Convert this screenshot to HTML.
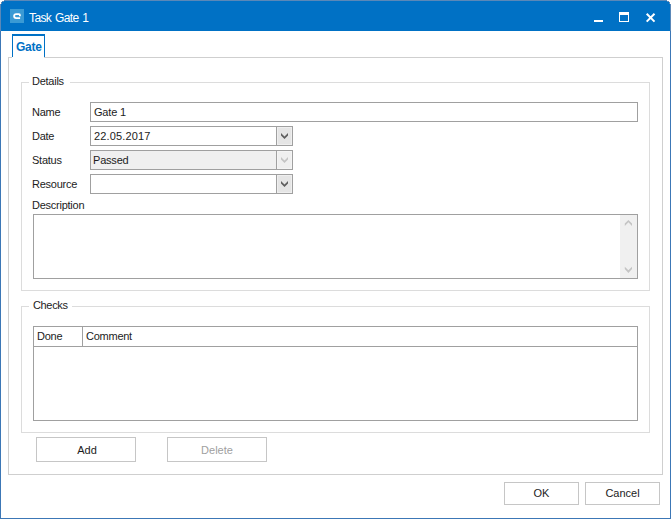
<!DOCTYPE html>
<html><head><meta charset="utf-8">
<style>
html,body{margin:0;padding:0;width:671px;height:519px;overflow:hidden;background:#fff;}
body{position:relative;font-family:"Liberation Sans",sans-serif;font-size:11px;color:#1c1c1c;}
.a{position:absolute;box-sizing:border-box;}
.t{position:absolute;white-space:nowrap;line-height:11px;font-size:11px;}
.win{left:0;top:0;width:671px;height:519px;border:1px solid #3c77b6;border-top-color:#5b88b8;background:#fff;}
.title{left:1px;top:1px;width:669px;height:30px;background:#0071c5;}
.grp{border:1px solid #dcdcdc;}
.inp{border:1px solid #a0a0a0;background:#fff;}
.btn{border:1px solid #c6c6c6;background:#fff;}
.dd{border-left:1px solid #a0a0a0;background:#e5e5e5;box-shadow:inset 0 0 0 1px #efefef;}
</style></head><body>
<div class="a win"></div>
<div class="a title"></div>
<div class="a" style="left:0;top:0;width:1px;height:31px;background:#5b88b8;"></div>
<div class="a" style="left:670px;top:0;width:1px;height:31px;background:#5b88b8;"></div>
<div class="a" style="left:0;top:0;width:4px;height:1px;background:#fff;"></div>
<div class="a" style="left:0;top:1px;width:2px;height:1px;background:#fff;"></div>
<div class="a" style="left:0;top:2px;width:1px;height:2px;background:#fff;"></div>
<div class="a" style="left:2px;top:1px;width:2px;height:1px;background:#5b88b8;"></div>
<div class="a" style="left:1px;top:2px;width:1px;height:2px;background:#5b88b8;"></div>
<div class="a" style="left:667px;top:0;width:4px;height:1px;background:#fff;"></div>
<div class="a" style="left:669px;top:1px;width:2px;height:1px;background:#fff;"></div>
<div class="a" style="left:670px;top:2px;width:1px;height:2px;background:#fff;"></div>
<div class="a" style="left:667px;top:1px;width:2px;height:1px;background:#5b88b8;"></div>
<div class="a" style="left:669px;top:2px;width:1px;height:2px;background:#5b88b8;"></div>
<!-- icon -->
<div class="a" style="left:10px;top:9px;width:14px;height:14px;background:#3a9ad4;"></div>
<svg class="a" style="left:10px;top:9px" width="14" height="14" viewBox="0 0 14 14">
<path d="M9.9 7.3 V6 Q9.9 5.1 9 5.1 H6.1 Q4.1 5.1 4.1 7.1 Q4.1 9.1 6.1 9.1 H10.1" fill="none" stroke="#fff" stroke-width="1.8"/>
</svg>
<div class="t" style="left:29px;top:12px;font-size:12px;line-height:12px;color:#fff;letter-spacing:-0.6px;word-spacing:1px;">Task Gate 1</div>
<!-- min -->
<div class="a" style="left:594px;top:20px;width:9px;height:2px;background:#fff;"></div>
<!-- max -->
<div class="a" style="left:619px;top:12px;width:10px;height:10px;border:1px solid #fff;border-top-width:3px;"></div>
<!-- close -->
<svg class="a" style="left:645px;top:12px" width="12" height="11" viewBox="0 0 12 11">
<path d="M1.7 1.8 L9.5 9.6 M9.5 1.8 L1.7 9.6" stroke="#fff" stroke-width="2" fill="none"/>
</svg>

<!-- tab panel -->
<div class="a" style="left:8px;top:57px;width:655px;height:418px;border:1px solid #cfcfcf;"></div>
<div class="a" style="left:12px;top:34px;width:33px;height:23px;border:1px solid #0071c5;border-top-width:2px;border-bottom:none;background:#fff;"></div>
<div class="a" style="left:12px;top:57px;width:32px;height:1px;background:#fff;"></div>
<div class="t" style="left:16px;top:41px;font-size:12px;line-height:12px;font-weight:bold;letter-spacing:-0.25px;color:#0071c5;">Gate</div>

<!-- Details group -->
<div class="a grp" style="left:21px;top:82px;width:629px;height:209px;"></div>
<div class="a" style="left:29px;top:78px;width:41px;height:8px;background:#fff;"></div>
<div class="t" style="left:32px;top:76px;letter-spacing:-0.25px;">Details</div>

<div class="t" style="left:32px;top:107px;letter-spacing:-0.25px;">Name</div>
<div class="t" style="left:32px;top:131px;letter-spacing:-0.25px;">Date</div>
<div class="t" style="left:32px;top:155px;letter-spacing:-0.25px;">Status</div>
<div class="t" style="left:32px;top:179px;letter-spacing:-0.25px;">Resource</div>
<div class="t" style="left:32px;top:200px;letter-spacing:-0.25px;">Description</div>

<div class="a inp" style="left:90px;top:102px;width:548px;height:20px;"></div>
<div class="t" style="left:94px;top:107px;letter-spacing:-0.2px;">Gate 1</div>

<div class="a inp" style="left:90px;top:126px;width:203px;height:20px;"></div>
<div class="a dd" style="left:276px;top:127px;width:16px;height:18px;"></div>
<svg class="a" style="left:277px;top:128px" width="15" height="18" viewBox="0 0 15 18">
<path d="M4 5 L7.5 8.5 L11 5 L11 7.4 L7.5 10.9 L4 7.4 Z" fill="#5f5f5f"/>
</svg>
<div class="t" style="left:94px;top:131px;letter-spacing:0.15px;">22.05.2017</div>

<div class="a inp" style="left:90px;top:150px;width:203px;height:20px;background:#f0f0f0;"></div>
<div class="a dd" style="left:276px;top:151px;width:16px;height:18px;background:#efefef;box-shadow:inset 0 0 0 1px #f4f4f4;"></div>
<svg class="a" style="left:277px;top:152px" width="15" height="18" viewBox="0 0 15 18">
<path d="M4 5 L7.5 8.5 L11 5 L11 7.4 L7.5 10.9 L4 7.4 Z" fill="#c4c4c4"/>
</svg>
<div class="t" style="left:93px;top:155px;letter-spacing:-0.2px;">Passed</div>

<div class="a inp" style="left:90px;top:174px;width:203px;height:20px;"></div>
<div class="a dd" style="left:276px;top:175px;width:16px;height:18px;"></div>
<svg class="a" style="left:277px;top:176px" width="15" height="18" viewBox="0 0 15 18">
<path d="M4 5 L7.5 8.5 L11 5 L11 7.4 L7.5 10.9 L4 7.4 Z" fill="#5f5f5f"/>
</svg>

<div class="a inp" style="left:33px;top:214px;width:605px;height:65px;"></div>
<div class="a" style="left:620px;top:215px;width:17px;height:63px;background:#f0f0f0;"></div>
<svg class="a" style="left:620px;top:215px" width="17" height="63" viewBox="0 0 17 63">
<path d="M4.8 10.9 L4.8 8.5 L8.4 4.9 L12 8.5 L12 10.9 L8.4 7.3 Z" fill="#c4c4c4"/>
<path d="M4.8 51.7 L8.4 55.3 L12 51.7 L12 54.1 L8.4 57.9 L4.8 54.1 Z" fill="#c4c4c4"/>
</svg>

<!-- Checks group -->
<div class="a grp" style="left:21px;top:306px;width:629px;height:127px;"></div>
<div class="a" style="left:29px;top:302px;width:43px;height:8px;background:#fff;"></div>
<div class="t" style="left:33px;top:300px;letter-spacing:-0.35px;">Checks</div>

<div class="a inp" style="left:33px;top:326px;width:605px;height:95px;"></div>
<div class="a" style="left:34px;top:346px;width:603px;height:1px;background:#a0a0a0;"></div>
<div class="a" style="left:82px;top:327px;width:1px;height:19px;background:#a0a0a0;"></div>
<div class="t" style="left:37px;top:331px;letter-spacing:-0.25px;">Done</div>
<div class="t" style="left:86px;top:331px;letter-spacing:-0.25px;">Comment</div>

<div class="a btn" style="left:36px;top:437px;width:100px;height:25px;"></div>
<div class="t" style="left:37px;top:445px;width:100px;text-align:center;">Add</div>
<div class="a btn" style="left:167px;top:437px;width:100px;height:25px;"></div>
<div class="t" style="left:167px;top:445px;width:100px;text-align:center;color:#a0a0a0;">Delete</div>

<div class="a btn" style="left:504px;top:482px;width:75px;height:23px;"></div>
<div class="t" style="left:504px;top:488px;width:75px;text-align:center;">OK</div>
<div class="a btn" style="left:585px;top:482px;width:75px;height:23px;"></div>
<div class="t" style="left:585px;top:488px;width:75px;text-align:center;">Cancel</div>
</body></html>
